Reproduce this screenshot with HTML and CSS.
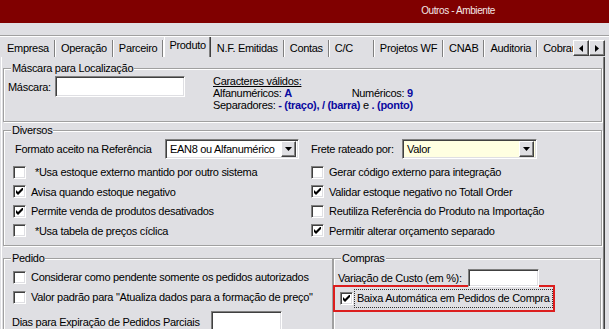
FILE: index.html
```html
<!DOCTYPE html>
<html lang="pt-BR">
<head>
    <meta charset="UTF-8">
    <meta name="viewport" content="width=device-width, initial-scale=1.0">
    <title>Outros - Ambiente</title>
    <link rel="stylesheet" href="styles.css">
</head>
<body>
    <div class="titlebar">Outros - Ambiente</div>

    <!-- Abas -->
    <div class="tabstrip">
        <div class="tabs">
            <span class="tab">Empresa</span>
            <span class="tab">Operação</span>
            <span class="tab">Parceiro</span>
            <span class="tab active">Produto</span>
            <span class="tab">N.F. Emitidas</span>
            <span class="tab">Contas</span>
            <span class="tab wide">C/C</span>
            <span class="tab">Projetos WF</span>
            <span class="tab">CNAB</span>
            <span class="tab">Auditoria</span>
            <span class="tab">Cobrança</span>
        </div>
        <div class="scroller">
            <span class="arrow"><svg width="4" height="7" viewBox="0 0 4 7"><path d="M4 0 L0 3.5 L4 7 Z"/></svg></span>
            <span class="arrow"><svg width="4" height="7" viewBox="0 0 4 7"><path d="M0 0 L4 3.5 L0 7 Z"/></svg></span>
        </div>
    </div>

    <div class="page">
        <!-- Máscara -->
        <fieldset class="group mask">
            <legend>Máscara para Localização</legend>
            <div class="mask-row">
                <span class="mask-label">Máscara:</span>
                <span class="edit mask-edit"></span>
                <div class="valid">
                    <div class="valid-title">Caracteres válidos:</div>
                    <div class="valid-line"><span>Alfanuméricos: <b>A</b></span><span>Numéricos: <b>9</b></span></div>
                    <div>Separadores: <b>- (traço), / (barra)</b> e <b>. (ponto)</b></div>
                </div>
            </div>
        </fieldset>

        <!-- Diversos -->
        <fieldset class="group misc">
            <legend>Diversos</legend>
            <div class="misc-grid">
                <div class="field">
                    <span class="ref-label">Formato aceito na Referência</span>
                    <span class="combo ref-combo"><span class="combo-text">EAN8 ou Alfanumérico</span><span class="drop"><svg width="7" height="4" viewBox="0 0 7 4"><path d="M0 0 H7 L3.5 4 Z"/></svg></span></span>
                </div>
                <div class="field">
                    <span class="frete-label">Frete rateado por:</span>
                    <span class="combo frete-combo"><span class="combo-text">Valor</span><span class="drop"><svg width="7" height="4" viewBox="0 0 7 4"><path d="M0 0 H7 L3.5 4 Z"/></svg></span></span>
                </div>

                <div class="check"><span class="box"></span><span class="spaced">*Usa estoque externo mantido por outro sistema</span></div>
                <div class="check"><span class="box"></span>Gerar código externo para integração</div>

                <div class="check"><span class="box"><svg width="7" height="7" viewBox="0 0 7 7"><path d="M0 2 L2 4 L7 -1 L7 2 L2 7 L0 5 Z"/></svg></span>Avisa quando estoque negativo</div>
                <div class="check"><span class="box"><svg width="7" height="7" viewBox="0 0 7 7"><path d="M0 2 L2 4 L7 -1 L7 2 L2 7 L0 5 Z"/></svg></span>Validar estoque negativo no Totall Order</div>

                <div class="check"><span class="box"><svg width="7" height="7" viewBox="0 0 7 7"><path d="M0 2 L2 4 L7 -1 L7 2 L2 7 L0 5 Z"/></svg></span>Permite venda de produtos desativados</div>
                <div class="check"><span class="box"></span>Reutiliza Referência do Produto na Importação</div>

                <div class="check"><span class="box"></span><span class="spaced">*Usa tabela de preços cíclica</span></div>
                <div class="check"><span class="box"><svg width="7" height="7" viewBox="0 0 7 7"><path d="M0 2 L2 4 L7 -1 L7 2 L2 7 L0 5 Z"/></svg></span>Permitir alterar orçamento separado</div>
            </div>
        </fieldset>

        <div class="bottom-row">
            <!-- Pedido -->
            <fieldset class="group pedido">
                <legend>Pedido</legend>
                <div class="check"><span class="box"></span>Considerar como pendente somente os pedidos autorizados</div>
                <div class="check"><span class="box"></span>Valor padrão para "Atualiza dados para a formação de preço"</div>
                <div class="field dias">
                    <span class="dias-label">Dias para Expiração de Pedidos Parciais</span>
                    <span class="edit dias-edit"></span>
                </div>
            </fieldset>

            <!-- Compras -->
            <fieldset class="group compras">
                <legend>Compras</legend>
                <div class="field custo">
                    <span class="custo-label">Variação de Custo (em %):</span>
                    <span class="edit custo-edit"></span>
                </div>
                <div class="highlight">
                    <div class="check"><span class="box"><svg width="7" height="7" viewBox="0 0 7 7"><path d="M0 2 L2 4 L7 -1 L7 2 L2 7 L0 5 Z"/></svg></span><span class="focus">Baixa Automática em Pedidos de Compra</span></div>
                </div>
            </fieldset>
        </div>
    </div>
</body>
</html>
```

FILE: styles.css
```css
* { box-sizing: border-box; }
body { margin: 0; height: 329px; overflow: hidden; background-color: #dfdfe3; color: #000; font-family: "Liberation Sans", Arial, sans-serif; font-size: 11px; letter-spacing: -0.3px; }

.titlebar { height: 23px; background-color: #800000; color: #f3e7e7; font-size: 10px; letter-spacing: -0.4px; line-height: 22px; text-align: right; padding-right: 114px; }

/* abas */
.tabstrip { display: flex; height: 22px; margin-top: 12px; border-top: 1px solid #a0a0a0; box-shadow: inset 0 1px 0 #fff; }
.tabs { flex: 1; min-width: 0; display: flex; align-items: flex-end; overflow: hidden; padding-left: 2px; white-space: nowrap; }
.tab { flex: none; height: 17px; line-height: 16px; padding: 0 5px; border-right: 1px solid #808080; box-shadow: 1px 0 0 #fff; margin-right: 1px; }
.tab.wide { padding-right: 20px; }
.tab.active { height: 20px; line-height: 16px; padding: 0 4px; border-left: 1px solid #fff; border-right: 1px solid #404040; box-shadow: inset -1px 0 0 #808080; }
.scroller { display: flex; align-items: flex-end; padding: 0 4px 1px 0; }
.arrow { width: 16px; height: 16px; display: flex; align-items: center; justify-content: center; border: 1px solid; border-color: #fff #404040 #404040 #fff; box-shadow: inset -1px -1px 0 #808080; }

/* pagina */
.page { height: 272px; margin: 0 5px 0 1px; padding: 1px 1px 0; border-left: 1px solid #fff; border-right: 1px solid #808080; box-shadow: 1px 0 0 #404040; }

.group { margin: 0; padding: 0; min-width: 0; border: 1px solid #a0a0a0; box-shadow: inset 1px 1px 0 #fff, 1px 1px 0 #fff; }
.group legend { margin-left: 7px; padding: 0 1px; line-height: 13px; background-color: #dfdfe3; }
.mask { margin-top: 4px; }
.misc { margin-top: 2px; }

.edit { display: block; background: #fff; border: 1px solid; border-color: #7f7f7f #fff #fff #7f7f7f; box-shadow: inset 1px 1px 0 #404040, inset -1px -1px 0 #dfdfe3; }

.mask-row { display: flex; align-items: flex-start; padding: 0 0 10px 4px; }
.mask-label { width: 47px; margin-top: 6px; line-height: 13px; }
.mask-edit { width: 130px; height: 21px; margin-top: 1px; }
.valid { margin-left: 28px; line-height: 12px; }
.valid-title { text-decoration: underline; }
.valid-line { display: flex; justify-content: space-between; }
.valid b { color: #0a0aa0; }

/* diversos */
.misc-grid { display: grid; grid-template-columns: 298px 1fr; grid-template-rows: 23px; grid-auto-rows: 19.5px; padding: 2px 0 5px 9px; }
.misc-grid .field { align-self: start; height: 20px; }
.field { display: flex; align-items: center; }
.ref-label { width: 152px; padding-left: 2px; }
.frete-label { width: 91px; }
.combo { display: flex; align-items: center; height: 20px; padding: 2px; background: #fff; border: 1px solid; border-color: #7f7f7f #fff #fff #7f7f7f; box-shadow: inset 1px 1px 0 #404040, inset -1px -1px 0 #dfdfe3; }
.combo-text { flex: 1; padding-left: 2px; }
.ref-combo { width: 134px; }
.frete-combo { width: 135px; background: #ffffe1; }
.drop { width: 15px; height: 16px; display: flex; align-items: center; justify-content: center; background: #dfdfe3; border: 1px solid; border-color: #fff #404040 #404040 #fff; box-shadow: inset -1px -1px 0 #808080; }

.check { display: flex; align-items: center; height: 20px; white-space: nowrap; }
.box { flex: none; width: 13px; height: 13px; margin-right: 5px; display: flex; align-items: center; justify-content: center; background: #fff; border: 1px solid; border-color: #7f7f7f #fff #fff #7f7f7f; box-shadow: inset 1px 1px 0 #404040, inset -1px -1px 0 #dfdfe3; }
.spaced { margin-left: 4px; }

/* pedido / compras */
.bottom-row { display: flex; margin-top: 6px; }
.pedido { width: 330px; height: 90px; padding: 2px 0 0 9px; overflow: hidden; }
.pedido legend { margin-left: -2px; }
.dias { margin: 4px 0 0 -1px; }
.dias-label { width: 199px; }
.dias-edit { width: 71px; height: 22px; }

.compras { flex: 1; height: 90px; margin-right: 1px; padding: 3px 0 0 4px; }
.compras legend { margin-left: 3px; }
.custo { height: 20px; }
.custo-label { width: 130px; }
.custo-edit { width: 71px; height: 18px; }
.highlight { width: 222px; height: 27px; margin: -3px 0 0 -5px; padding-left: 5px; border: 2px solid #dc1e1e; }
.highlight .check { height: 23px; }
.highlight .box { margin-right: 2px; }
.focus { outline: 1px dotted #333; outline-offset: 0; padding: 2px 2px 3px; }
```
